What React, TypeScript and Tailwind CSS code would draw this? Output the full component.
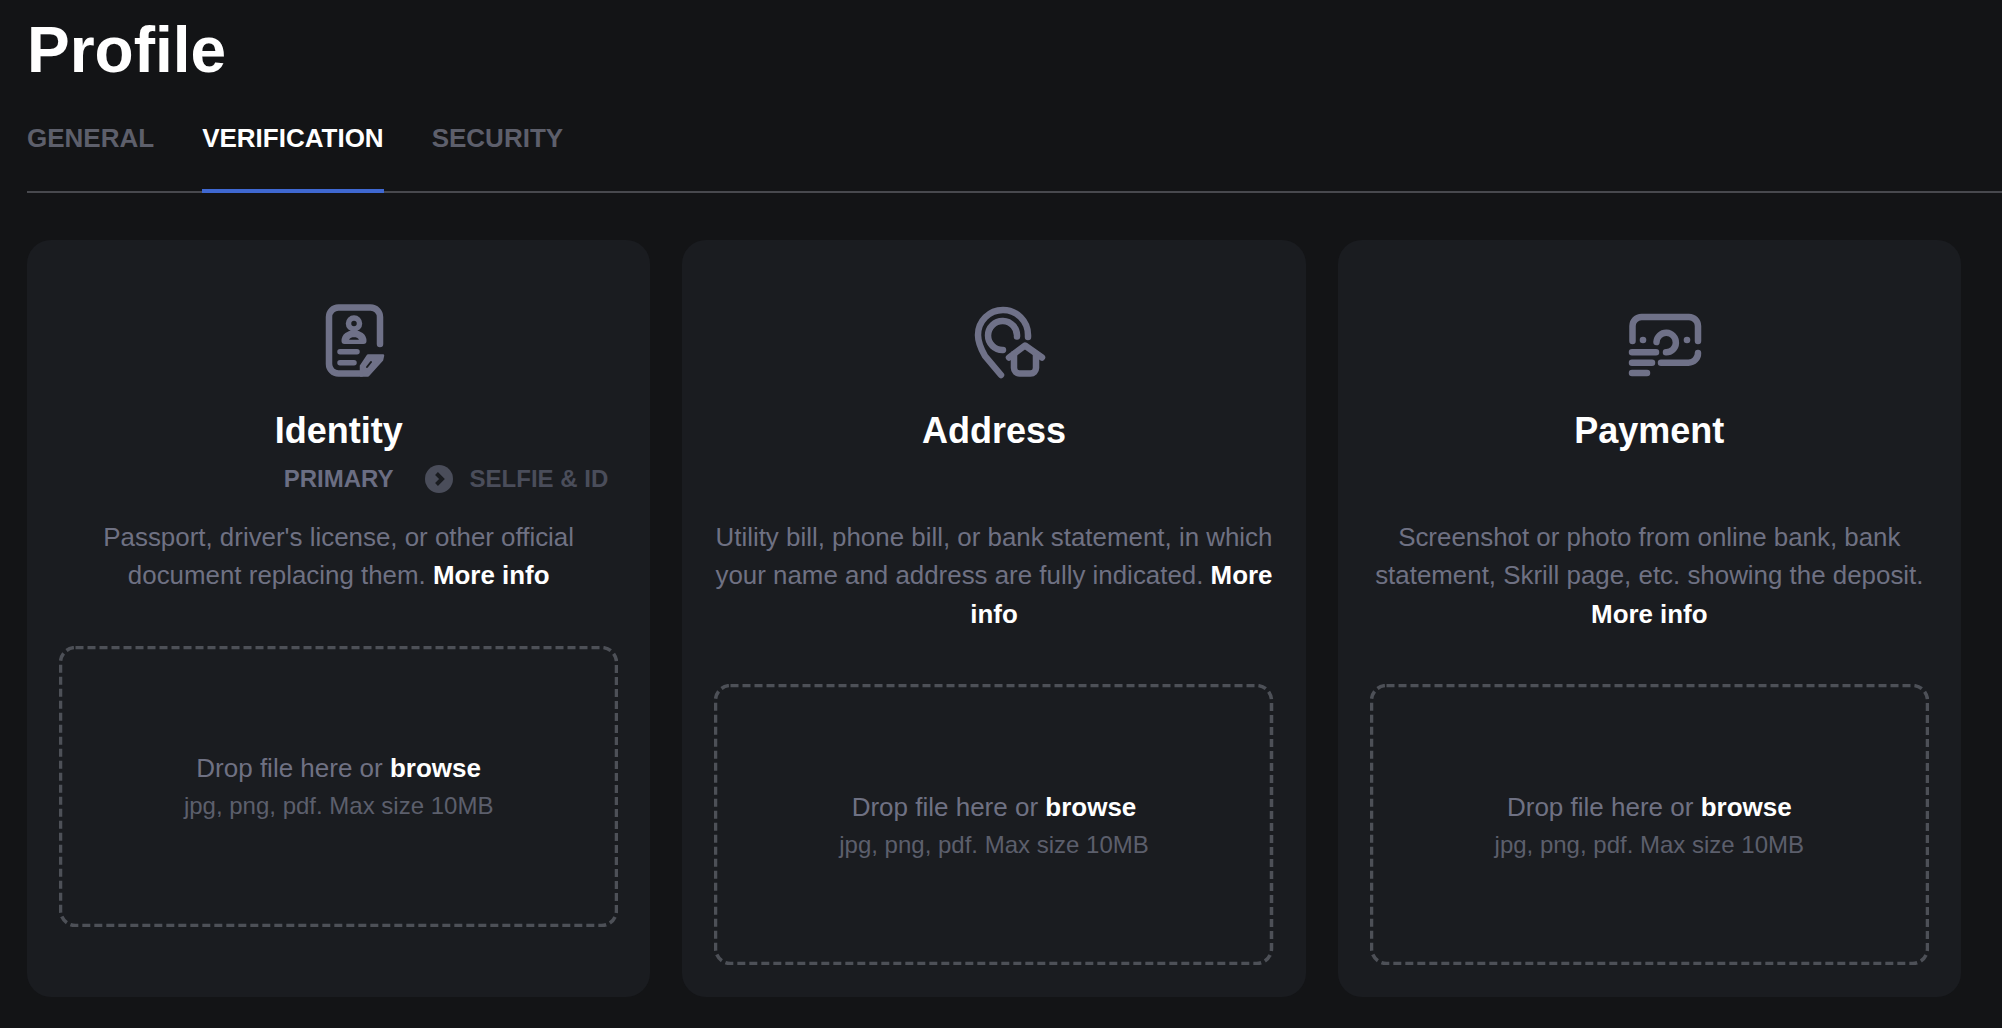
import React from "react";

const IC = "#6f7188";

function IdentityIcon() {
  return (
    <svg width="112" height="80" viewBox="0 0 112 80" fill="none" stroke={IC} strokeWidth="6.500" strokeLinecap="round" strokeLinejoin="round">
      <path d="M97 44V17a9.500 9.500 0 0 0-9.500-9.500H55.500a9.500 9.500 0 0 0-9.500 9.500V64a9.500 9.500 0 0 0 9.500 9.500H78" />
      <circle cx="71" cy="23.500" r="5.500" strokeWidth="5.500" />
      <path d="M61.500 41c0-5 4-7.500 9.500-7.500s9.500 2.500 9.500 7.500z" strokeWidth="6" fill={IC} />
      <path d="M66 39.800c1-2 3-2.500 5-2.500s4 .5 5 2.500z" fill="#1a1c20" stroke="none" />
      <path d="M57 51.800H74M57 62.800H71" strokeWidth="5.500" />
      <path d="M85 55.500H100L99 60 85 75.500H78V66z" fill={IC} strokeWidth="2.500" />
      <path d="M84 67L88 62" stroke="#1a1c20" strokeWidth="2" />
    </svg>
  );
}

function AddressIcon() {
  return (
    <svg width="112" height="80" viewBox="0 0 112 80" fill="none" stroke={IC} strokeWidth="6.500" strokeLinecap="round" strokeLinejoin="round">
      <path d="M90 37V35a25 25 0 0 0-50 0c0 8 3 14 7 21l16 19" />
      <path d="M79 36.500a14.500 14.500 0 1 0-14 13.500" />
      <path d="M71 57.500L87 45.500 104 57.500" />
      <path d="M76 54V68a5.500 5.500 0 0 0 5.500 5.500H92.500A5.500 5.500 0 0 0 98 68V54" />
    </svg>
  );
}

function PaymentIcon() {
  return (
    <svg width="112" height="80" viewBox="0 0 112 80" fill="none" stroke={IC} strokeWidth="6.500" strokeLinecap="round" strokeLinejoin="round">
      <path d="M39.500 41V26a9 9 0 0 1 9-9H96a9 9 0 0 1 9 9V41" />
      <path d="M105 53a9.500 9.500 0 0 1-9.500 9.700H68" />
      <path d="M63.500 42a9.700 9.700 0 1 1 9.500 10.200" />
      <path d="M39 52.300H63M39 62.700H59M39 73H54" />
      <circle cx="50" cy="40" r="3.300" fill={IC} stroke="none" />
      <circle cx="94" cy="40" r="3.300" fill={IC} stroke="none" />
    </svg>
  );
}

function DropZone() {
  return (
    <div className="relative flex h-[281px] flex-col items-center justify-center">
      <svg className="absolute inset-0" width="100%" height="281" fill="none">
        <rect x="1.500" y="1.500" width="556" height="278" rx="15" stroke="#4d5057" strokeWidth="3.500" strokeDasharray="8 4" />
      </svg>
      <p className="text-[26px] leading-[32px] text-[#6f7183]">
        Drop file here or <span className="font-bold text-white">browse</span>
      </p>
      <p className="mt-[8px] text-[24px] leading-[28px] text-[#5c5f6c]">jpg, png, pdf. Max size 10MB</p>
    </div>
  );
}

function More() {
  return <span className="font-bold text-white">More info</span>;
}

function Card({ icon, title, sub, children }: { icon: React.ReactNode; title: string; sub?: boolean; children: React.ReactNode }) {
  return (
    <section className="flex flex-col rounded-[24px] bg-[#1a1c20] px-8 pt-[60px] pb-8">
      <div className="flex justify-center">{icon}</div>
      <h2 className="mt-[28px] text-center text-[36px] leading-[45px] font-bold text-white">{title}</h2>
      <div className="mt-[12px] flex h-[28px] justify-center">
        {sub && (
          <span className="relative text-[24px] leading-[28px] font-bold text-[#6b6e83]">
            PRIMARY
            <span className="absolute top-0 left-[calc(100%+31px)] flex items-center gap-[17px] whitespace-nowrap text-[#4a4d5a]">
              <svg width="28" height="28" viewBox="0 0 28 28">
                <circle cx="14" cy="14" r="14" fill="#4a4d5a" />
                <path d="M11.500 8.500L17 14 11.500 19.500" fill="none" stroke="#1a1c20" strokeWidth="4" />
              </svg>
              SELFIE &amp; ID
            </span>
          </span>
        )}
      </div>
      <p className="mt-[25px] mb-[51px] text-center text-[25.900px] leading-[38.400px] text-[#6f7183]">{children}</p>
      <DropZone />
    </section>
  );
}

export default function App() {
  return (
    <div className="h-[1028px] overflow-hidden bg-[#131416] pt-[14px] font-['Liberation_Sans',Arial,sans-serif]">
      <h1 className="ml-[27px] text-[64px] leading-[72px] font-bold text-white">Profile</h1>
      <nav className="mt-[37px] ml-[27px] flex gap-[48px] border-b-2 border-[#48494e] text-[26px] leading-[30px] font-bold text-[#5d5f6b]">
        <span className="pb-[38px]">GENERAL</span>
        <span className="relative pb-[38px] text-white">
          VERIFICATION
          <span className="absolute right-0 -bottom-[2px] left-0 h-[4px] bg-[#3f68d1]" />
        </span>
        <span className="pb-[38px]">SECURITY</span>
      </nav>
      <main className="mt-[47px] mr-[41px] ml-[27px] grid grid-cols-3 items-stretch gap-8">
        <Card icon={<IdentityIcon />} title="Identity" sub>
          Passport, driver's license, or other official document replacing them. <More />
        </Card>
        <Card icon={<AddressIcon />} title="Address">
          Utility bill, phone bill, or bank statement, in which your name and address are fully indicated. <More />
        </Card>
        <Card icon={<PaymentIcon />} title="Payment">
          Screenshot or photo from online bank, bank statement, Skrill page, etc. showing the deposit. <More />
        </Card>
      </main>
    </div>
  );
}
